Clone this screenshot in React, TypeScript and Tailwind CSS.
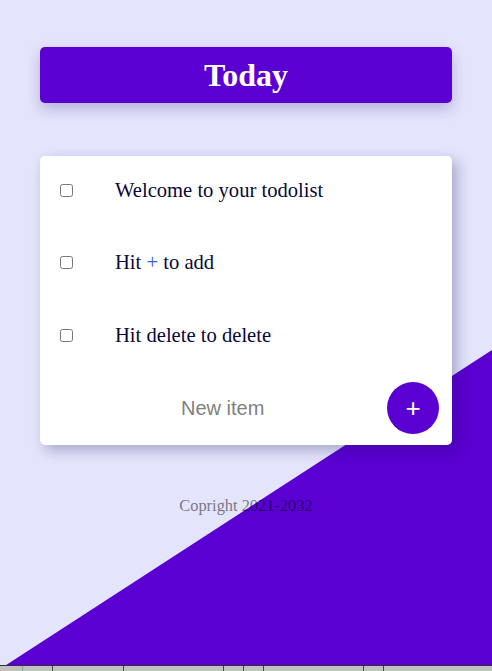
import React from 'react'

const items = [
  { id: 1, text: <>Welcome to your todolist</> },
  { id: 2, text: <>Hit <span className="text-[#3160e0]">+</span> to add</> },
  { id: 3, text: <>Hit delete to delete</> },
]

const strip = [
  { w: 'w-[23px]', c: 'border-[#9a9a9a]' },
  { w: 'w-[30px]', c: 'border-[#444]' },
  { w: 'w-[71px]', c: 'border-[#444]' },
  { w: 'w-[100px]', c: 'border-[#444]' },
  { w: 'w-[20px]', c: 'border-[#444]' },
  { w: 'w-[20px]', c: 'border-[#444]' },
  { w: 'w-[100px]', c: 'border-[#444]' },
  { w: 'w-[20px]', c: 'border-[#444]' },
]

export default function App() {
  return (
    <div className="w-[492px] font-['Liberation_Serif',serif]">
      <div className="relative h-[665px] overflow-hidden bg-[#e4e4fc]">
        <svg className="absolute inset-0" width="492" height="665" viewBox="0 0 492 665">
          <polygon points="0,669 492,350 492,665 0,665" fill="#5a00d2" />
        </svg>

        <div className="relative px-10 pt-[47px]">
          <h1 className="h-14 rounded-[5px] bg-[#5a00d2] text-center text-[32px] font-bold leading-[56px] text-white shadow-[0_6px_14px_rgba(40,30,120,0.25)]">
            Today
          </h1>

          <div className="mt-[53px] flex h-[289px] flex-col gap-[4.5px] rounded-[5px] bg-white shadow-[5px_5px_14px_rgba(30,20,90,0.3)]">
            {items.map((item) => (
              <div key={item.id} className="flex h-[68px] items-center pl-[20px]">
                <input type="checkbox" className="h-[13px] w-[13px]" />
                <p className="ml-[42px] text-[20.6px] text-[#08083a]">{item.text}</p>
              </div>
            ))}
            <form className="flex h-[68px] items-center" onSubmit={(e) => e.preventDefault()}>
              <input
                type="text"
                placeholder="New item"
                className="ml-[141px] w-[190px] bg-transparent font-['Liberation_Sans',Arial,sans-serif] text-[20px] outline-none placeholder:text-[#808080]"
              />
              <button
                type="submit"
                className="ml-auto mr-[13px] flex h-[52px] w-[52px] items-center justify-center rounded-full bg-[#5a00d2] font-['Liberation_Sans',Arial,sans-serif] text-[26px] leading-none text-white"
              >
                +
              </button>
            </form>
          </div>

          <p className="mt-[49px] text-center text-[16.4px] leading-6 text-black/50">Copright 2021-2032</p>
        </div>
      </div>

      <div className="flex h-[6px] border-t border-[#333] bg-[#c0c0c0]">
        {strip.map((s, i) => (
          <div key={i} className={`${s.w} border-r ${s.c}`} />
        ))}
      </div>
    </div>
  )
}
